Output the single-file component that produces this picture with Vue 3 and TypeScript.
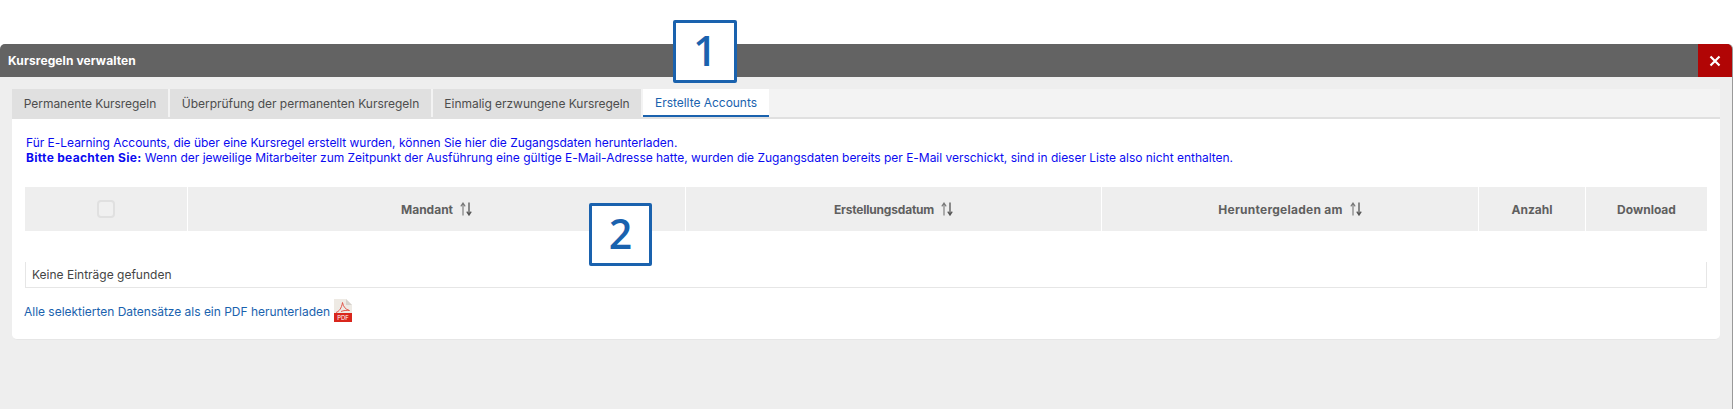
<template>
  <div class="page">
    <div class="dialog">
      <div class="dialog-header">
        <span class="dialog-title">Kursregeln verwalten</span>
        <button class="close-button" aria-label="Schließen">
          <svg width="12" height="12" viewBox="0 0 12 12">
            <path d="M1.5 1.5l9 9M10.5 1.5l-9 9" stroke="#fff" stroke-width="2.2" fill="none" />
          </svg>
        </button>
      </div>

      <div class="dialog-body">
        <div class="tabs">
          <div
            v-for="tab in tabs"
            :key="tab"
            class="tab"
            :class="{ active: tab === activeTab }"
          >
            {{ tab }}
          </div>
        </div>

        <div class="panel">
          <div class="notice">
            <div>Für E-Learning Accounts, die über eine Kursregel erstellt wurden, können Sie hier die Zugangsdaten herunterladen.</div>
            <div><b>Bitte beachten Sie:</b> Wenn der jeweilige Mitarbeiter zum Zeitpunkt der Ausführung eine gültige E-Mail-Adresse hatte, wurden die Zugangsdaten bereits per E-Mail verschickt, sind in dieser Liste also nicht enthalten.</div>
          </div>

          <div class="table-head">
            <div class="th check-col"><span class="checkbox"></span></div>
            <div v-for="col in columns" :key="col.label" class="th" :class="col.cls">
              <span>{{ col.label }}</span>
              <svg v-if="col.sortable" class="sort" width="12" height="14" viewBox="0 0 12 14">
                <path d="M3 13.500V1.500M.8 4.400L3 1l2.200 3.400" stroke="#777" stroke-width="1.100" fill="none" />
                <path d="M9 .5v12M6.800 9.600L9 13l2.200-3.400" stroke="#555" stroke-width="1.300" fill="none" />
              </svg>
            </div>
          </div>

          <div class="empty-row">Keine Einträge gefunden</div>

          <div class="download-row">
            <a class="download-link">Alle selektierten Datensätze als ein PDF herunterladen</a>
            <svg class="pdf-icon" width="18" height="23" viewBox="0 0 18 23">
              <path d="M0 0h12l6 6v17H0z" fill="#eeeae4" />
              <path d="M12 0l6 6h-6z" fill="#d6d2cc" />
              <path d="M2 13.500c3-1 5.500-4 6.500-10 .6 4 3 7 7 8-3-.3-6-.1-8.500 1" stroke="#e2574c" stroke-width="1" fill="none" />
              <rect y="14" width="18" height="9" fill="#d9261c" />
              <text x="9" y="21.400" text-anchor="middle" class="pdf-text">PDF</text>
            </svg>
          </div>
        </div>
      </div>
    </div>

    <div class="callout callout-one">1</div>
    <div class="callout callout-two">2</div>
  </div>
</template>

<script setup lang="ts">
const activeTab = "Erstellte Accounts";

const tabs = [
  "Permanente Kursregeln",
  "Überprüfung der permanenten Kursregeln",
  "Einmalig erzwungene Kursregeln",
  "Erstellte Accounts",
];

const columns = [
  { label: "Mandant", sortable: true, cls: "mandant-col" },
  { label: "Erstellungsdatum", sortable: true, cls: "date-col" },
  { label: "Heruntergeladen am", sortable: true, cls: "loaded-col" },
  { label: "Anzahl", sortable: false, cls: "count-col" },
  { label: "Download", sortable: false, cls: "download-col" },
];
</script>

<style>
html,
body {
  margin: 0;
  background: #fff;
}
</style>

<style scoped>
.page {
  position: relative;
  height: 409px;
  overflow: hidden;
  padding-top: 44px;
  box-sizing: border-box;
  font-family: Inter, Roboto, sans-serif;
  font-size: 12px;
  color: #444;
}

.dialog {
  width: 1733px;
  height: 365px;
  box-sizing: border-box;
  background: #eee;
  border-right: 1px solid #999;
  border-radius: 5px 5px 0 0;
}

.dialog-header {
  display: flex;
  align-items: center;
  justify-content: space-between;
  height: 33px;
  background: #636363;
  border-radius: 5px 5px 0 0;
  padding-left: 8px;
}

.dialog-title {
  color: #fff;
  font-weight: 700;
  letter-spacing: 0.1px;
}

.close-button {
  display: flex;
  align-items: center;
  justify-content: center;
  width: 34px;
  height: 33px;
  padding: 0;
  border: none;
  background: #b10505;
  border-top-right-radius: 5px;
}

.dialog-body {
  padding: 12px 12px 0;
}

.tabs {
  display: flex;
  gap: 2px;
  height: 30px;
  box-sizing: border-box;
  background: #f3f3f3;
  border-bottom: 2px solid #e0e0e0;
}

.tab {
  display: flex;
  align-items: center;
  justify-content: center;
  height: 28px;
  padding: 0 12px;
  box-sizing: border-box;
  background: #e0e0e0;
  color: #4d4d4d;
  white-space: nowrap;
  letter-spacing: -0.03px;
}

.tab:nth-child(1) { width: 156px; }
.tab:nth-child(2) { width: 261px; }
.tab:nth-child(3) { width: 208px; }
.tab:nth-child(4) { width: 126px; }

.tab.active {
  background: #fff;
  color: #1a62ae;
  border-bottom: 2px solid #1a62ae;
}

.panel {
  height: 221px;
  box-sizing: border-box;
  padding: 16px 13px 0;
  background: #fff;
  border-radius: 0 0 5px 5px;
  border-bottom: 1px solid #e6e6e6;
}

.notice {
  padding-left: 1px;
  color: #0b0bf0;
  line-height: 15px;
  letter-spacing: -0.02px;
}

.notice b {
  letter-spacing: 0.3px;
}

.table-head {
  display: flex;
  gap: 1px;
  height: 44px;
  margin-top: 22px;
}

.th {
  display: flex;
  align-items: center;
  justify-content: center;
  gap: 7px;
  background: #eee;
  color: #5f5f5f;
  font-weight: 700;
}

.check-col { width: 162px; }
.mandant-col { width: 497px; }
.date-col { width: 415px; letter-spacing: -0.2px; }
.loaded-col { width: 376px; letter-spacing: 0.25px; }
.count-col { width: 106px; }
.download-col { width: 121px; }

.checkbox {
  width: 14px;
  height: 14px;
  border: 2px solid #e0e0e0;
  border-radius: 4px;
  background: #f0f0f0;
}

.empty-row {
  display: flex;
  align-items: center;
  height: 26px;
  width: 1682px;
  margin-top: 31px;
  padding-left: 6px;
  box-sizing: border-box;
  border: 1px solid #e6e6e6;
  border-top: none;
  color: #444;
}

.download-row {
  display: flex;
  align-items: flex-start;
  gap: 4px;
  margin-top: 11px;
  margin-left: -1px;
}

.download-link {
  margin-top: 5px;
  line-height: 15px;
  color: #1a62ae;
  letter-spacing: -0.02px;
}

.pdf-text {
  font-size: 6px;
  fill: #fff;
}

.callout {
  position: absolute;
  display: flex;
  align-items: center;
  justify-content: center;
  box-sizing: border-box;
  padding-bottom: 3px;
  border: 3px solid #1a62ae;
  border-radius: 2px;
  background: #fff;
  color: #1a62ae;
  font-family: "Open Sans", sans-serif;
  font-size: 41px;
  font-weight: 600;
}

.callout-one {
  left: 673px;
  top: 20px;
  width: 64px;
  height: 63px;
}

.callout-two {
  left: 589px;
  top: 203px;
  width: 63px;
  height: 63px;
}
</style>
